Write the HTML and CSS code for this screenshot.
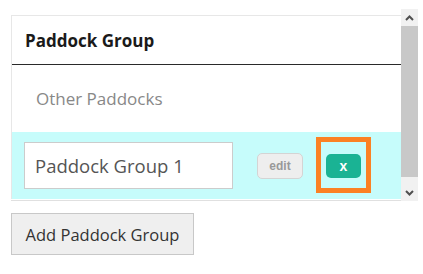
FILE: index.html
```html
<!DOCTYPE html>
<html>
<head>
<meta charset="utf-8">
<link rel="stylesheet" href="styles.css">
</head>
<body>
<div class="page">
  <div class="panel">
    <div class="viewport">
      <div class="card">
        <div class="card-head">Paddock Group</div>
        <div class="row-other">Other Paddocks</div>
        <div class="row-group">
          <div class="name-input">Paddock Group 1</div>
          <div class="btn-edit">edit</div>
          <div class="highlight">
            <div class="btn-x">x</div>
          </div>
        </div>
      </div>
    </div>
    <div class="scrollbar">
      <div class="sb-btn">
        <svg width="9" height="6" viewBox="0 0 9 6"><polyline points="1,5 4.5,1.5 8,5" fill="none" stroke="#505050" stroke-width="2"/></svg>
      </div>
      <div class="sb-thumb"></div>
      <div class="sb-track"></div>
      <div class="sb-btn">
        <svg width="9" height="6" viewBox="0 0 9 6"><polyline points="1,1 4.5,4.5 8,1" fill="none" stroke="#505050" stroke-width="2"/></svg>
      </div>
    </div>
  </div>
  <div class="btn-add">Add Paddock Group</div>
</div>
</body>
</html>
```
FILE: styles.css
```css
html, body {
  margin: 0;
  padding: 0;
  background: #fff;
}
.page {
  padding: 9px 0 0 11px;
  font-family: "Open Sans", "Lato", sans-serif;
}
.panel {
  display: flex;
  width: 407px;
  height: 192px;
}
.viewport {
  flex: 1;
  padding-top: 6px;
  overflow: hidden;
  border-bottom: 1px solid #e0e0e0;
}
.card {
  border-left: 1px solid #e7e7e7;
  border-top: 1px solid #e7e7e7;
}
.card-head {
  height: 48px;
  border-bottom: 1px solid #2a2a2a;
  display: flex;
  align-items: center;
  padding-left: 13px;
  font-size: 17px;
  font-weight: 700;
  color: #1a1a1a;
}
.row-other {
  height: 67px;
  display: flex;
  align-items: center;
  padding-left: 24px;
  font-size: 17px;
  color: #888;
}
.row-group {
  height: 67px;
  background: #c6fcfb;
  display: flex;
  align-items: center;
  padding-left: 12px;
}
.name-input {
  width: 197px;
  height: 45px;
  border: 1px solid #ccc;
  background: #fff;
  display: flex;
  align-items: center;
  padding-left: 10px;
  font-size: 18.5px;
  color: #555;
  box-sizing: content-box;
}
.btn-edit {
  margin-left: 24px;
  width: 44px;
  height: 24px;
  border: 1px solid #d4d4d4;
  border-radius: 5px;
  background: #eee;
  display: flex;
  align-items: center;
  justify-content: center;
  font-family: "Liberation Sans", Arial, sans-serif;
  font-weight: 700;
  font-size: 12px;
  color: #999;
}
.highlight {
  margin-left: 13px;
  margin-top: -1px;
  width: 45px;
  height: 46px;
  border: 5px solid #fb8124;
  display: flex;
  align-items: center;
  justify-content: center;
}
.btn-x {
  width: 35px;
  height: 24px;
  border-radius: 5px;
  background: #1ab394;
  color: #fff;
  font-family: "Liberation Sans", Arial, sans-serif;
  font-weight: 700;
  font-size: 14px;
  display: flex;
  align-items: center;
  justify-content: center;
  margin-top: 2px;
}
.scrollbar {
  width: 17px;
  display: flex;
  flex-direction: column;
  background: #f1f1f1;
}
.sb-btn {
  height: 17px;
  display: flex;
  align-items: center;
  justify-content: center;
}
.sb-thumb {
  height: 151px;
  background: #c8c8c8;
}
.sb-track {
  flex: 1;
}
.btn-add {
  margin-top: 12px;
  width: 181px;
  height: 40px;
  border: 1px solid #c8c8c8;
  background: #efefef;
  display: flex;
  align-items: center;
  justify-content: center;
  font-size: 16.5px;
  color: #333;
}
```
